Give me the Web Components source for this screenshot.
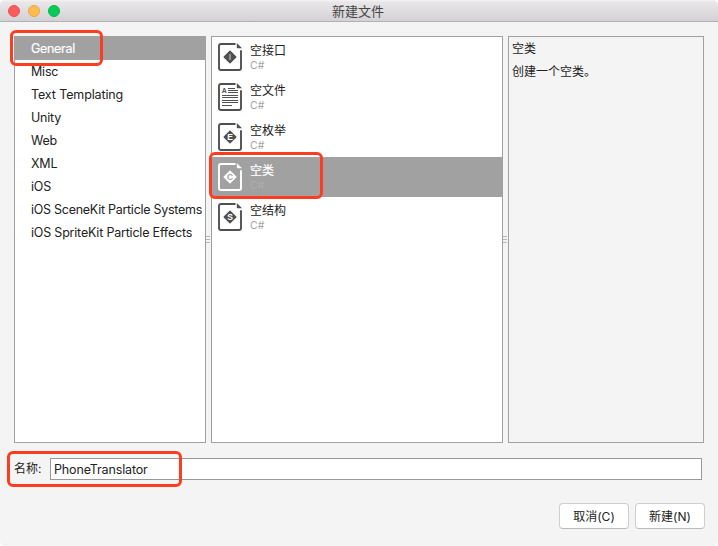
<!DOCTYPE html>
<html lang="zh-CN">
<head>
<meta charset="utf-8">
<title>新建文件</title>
<style>
html,body{margin:0;background:#fff}
body{width:718px;height:546px;overflow:hidden;font:12.5px/23px Inter,"Noto Sans CJK SC",sans-serif;color:#222}
</style>
</head>
<body>
<new-file-dialog></new-file-dialog>
<script>
const define = (name, html, setup) => customElements.define(name, class extends HTMLElement {
  connectedCallback() {
    if (this.shadowRoot) return;
    const t = document.createElement('template');
    t.innerHTML = html;
    this.attachShadow({mode: 'open'}).append(t.content.cloneNode(true));
    if (setup) setup(this, this.shadowRoot);
  }
});

define('title-bar', `<style>
:host{display:flex;align-items:center;justify-content:center;position:relative;height:22px;box-sizing:border-box;border-bottom:1px solid #b3b1b3;padding-right:2px;background:linear-gradient(#f4f3f4 0,#e9e7e9 2px,#d3d1d3 100%);font-size:13px;line-height:20px;color:#454545}
.lights{position:absolute;left:8px;top:5px;display:flex;gap:8px}
i{width:12px;height:12px;border-radius:50%;box-sizing:border-box;border:1px solid #e8504f;background:#fc5b5f}
i:nth-child(2){background:#fdbc4f;border-color:#e5a845}
i:nth-child(3){background:#05cb57;border-color:#06b74c}
</style><div class="lights"><i></i><i></i><i></i></div><slot></slot>`);

define('category-item', `<style>
:host{display:block;height:23px;padding-left:16px;white-space:nowrap;box-sizing:border-box;line-height:24px;letter-spacing:-.2px}
:host([selected]){background:#a1a1a1;color:#fff;letter-spacing:-.3px;-webkit-text-stroke:.2px #fff}
:host([loose]){letter-spacing:-.12px}
:host([tight]){letter-spacing:-.27px}
</style><slot></slot>`);

define('file-icon', `<style>
:host{display:block;width:24px;height:28px;color:#505050}
svg{display:block}
text{font:bold 8.5px "Liberation Sans",sans-serif;text-anchor:middle}
text.a{font-size:7px}
</style><svg width="24" height="28" viewBox="0 0 24 28">
<path d="M17.5 1H3Q1 1 1 3v22q0 2 2 2h18q2 0 2-2V7.3" fill="none" stroke="currentColor" stroke-width="1.9"/>
<path d="M18.8 0L24 5.2H19.6Q18.8 5.2 18.8 4.4Z" fill="currentColor"/><g></g></svg>`, (host, root) => {
  const k = host.getAttribute('kind');
  const bg = host.hasAttribute('selected') ? '#a1a1a1' : k === 'I' ? '#b0b0b0' : '#fff';
  root.querySelector('g').innerHTML = k === 'file'
    ? '<text class="a" x="6.4" y="9.5" fill="currentColor">A</text><path d="M10 5.5H17M10 7.5H20M10 9.5H20M4 12.5H20M4 14.5H20M4 17.5H20M4 19.5H20M4 22.5H14" stroke="currentColor" stroke-width="1"/>'
    : `<path d="M12 8.3L17.8 14 12 19.7 6.2 14Z" fill="currentColor" stroke="currentColor" stroke-width="1.4" stroke-linejoin="round"/><text x="12" y="17" fill="${bg}">${k}</text>`;
});

define('template-item', `<style>
:host{display:flex;height:40px;box-sizing:border-box;padding:6px 0 0 6px;gap:8px}
:host([selected]){background:#a1a1a1}
.name{display:block;height:16px;line-height:15px;font-size:12px}
.lang{display:block;line-height:13px;font-size:10.5px;color:#a3a3a3}
:host([selected]) .name{color:#fff;-webkit-text-stroke:.2px #fff}
:host([selected]) .lang{color:#adadad}
:host([selected]) file-icon{color:#fff}
</style><file-icon></file-icon><div><span class="name"><slot></slot></span><span class="lang">C#</span></div>`, (host, root) => {
  const icon = document.createElement('file-icon');
  icon.setAttribute('kind', host.getAttribute('kind'));
  icon.toggleAttribute('selected', host.hasAttribute('selected'));
  root.querySelector('file-icon').replaceWith(icon);
});

define('list-panel', `<style>
:host{display:block;box-sizing:border-box;border:1px solid #a1a1a1;background:#fff;overflow:hidden}
:host([plain]){background:#f4f4f4;padding-left:3px;font-size:12px}
</style><slot></slot>`);

define('split-grip', `<style>
:host{display:flex;flex-direction:column;align-items:flex-start;justify-content:center;gap:2px}
i{width:4px;height:1px;background:#b5b5b5}
</style><i></i><i></i><i></i>`);

define('push-button', `<style>
:host{display:flex;width:70px;height:26px;align-items:center;justify-content:center;box-sizing:border-box;border:1px solid #cecece;border-bottom-color:#bcbcbc;border-radius:4px;background:#fff;font-size:12px}
</style><slot></slot>`);

define('marker-box', `<style>
:host{position:absolute;box-sizing:border-box;border:3px solid #fc3d22;border-radius:6px;pointer-events:none}
</style>`);

define('new-file-dialog', `<style>
:host{display:flex;flex-direction:column;position:relative;width:718px;height:546px;box-sizing:border-box;background:#f4f4f4;border-radius:5px;overflow:hidden}
.panels{display:grid;grid-template-columns:192px 5px 292px 5px 196px;height:407px;margin:14px 14px 0}
.field{display:flex;align-items:center;margin:15px 16px 0 14px;height:22px}
label{width:36px;font-size:12px;line-height:22px}
.input{flex:1;height:22px;box-sizing:border-box;border:1px solid #999;background:#fff;padding-left:3px;line-height:22px;letter-spacing:-.15px}
.actions{display:flex;justify-content:flex-end;gap:6px;margin:23px 13px 0 0}
</style>
<title-bar>新建文件</title-bar>
<div class="panels">
<list-panel><category-item selected>General</category-item><category-item>Misc</category-item><category-item loose>Text Templating</category-item><category-item>Unity</category-item><category-item>Web</category-item><category-item>XML</category-item><category-item>iOS</category-item><category-item tight>iOS SceneKit Particle Systems</category-item><category-item>iOS SpriteKit Particle Effects</category-item></list-panel>
<split-grip></split-grip>
<list-panel><template-item kind="I">空接口</template-item><template-item kind="file">空文件</template-item><template-item kind="E">空枚举</template-item><template-item kind="C" selected>空类</template-item><template-item kind="S">空结构</template-item></list-panel>
<split-grip></split-grip>
<list-panel plain><div>空类</div><div>创建一个空类。</div></list-panel>
</div>
<div class="field"><label>名称:</label><div class="input">PhoneTranslator</div></div>
<div class="actions"><push-button>取消(C)</push-button><push-button>新建(N)</push-button></div>
<marker-box style="left:10px;top:30px;width:93px;height:36px"></marker-box>
<marker-box style="left:209px;top:152px;width:114px;height:47px"></marker-box>
<marker-box style="left:7px;top:451px;width:175px;height:36px"></marker-box>`);
</script>
</body>
</html>
